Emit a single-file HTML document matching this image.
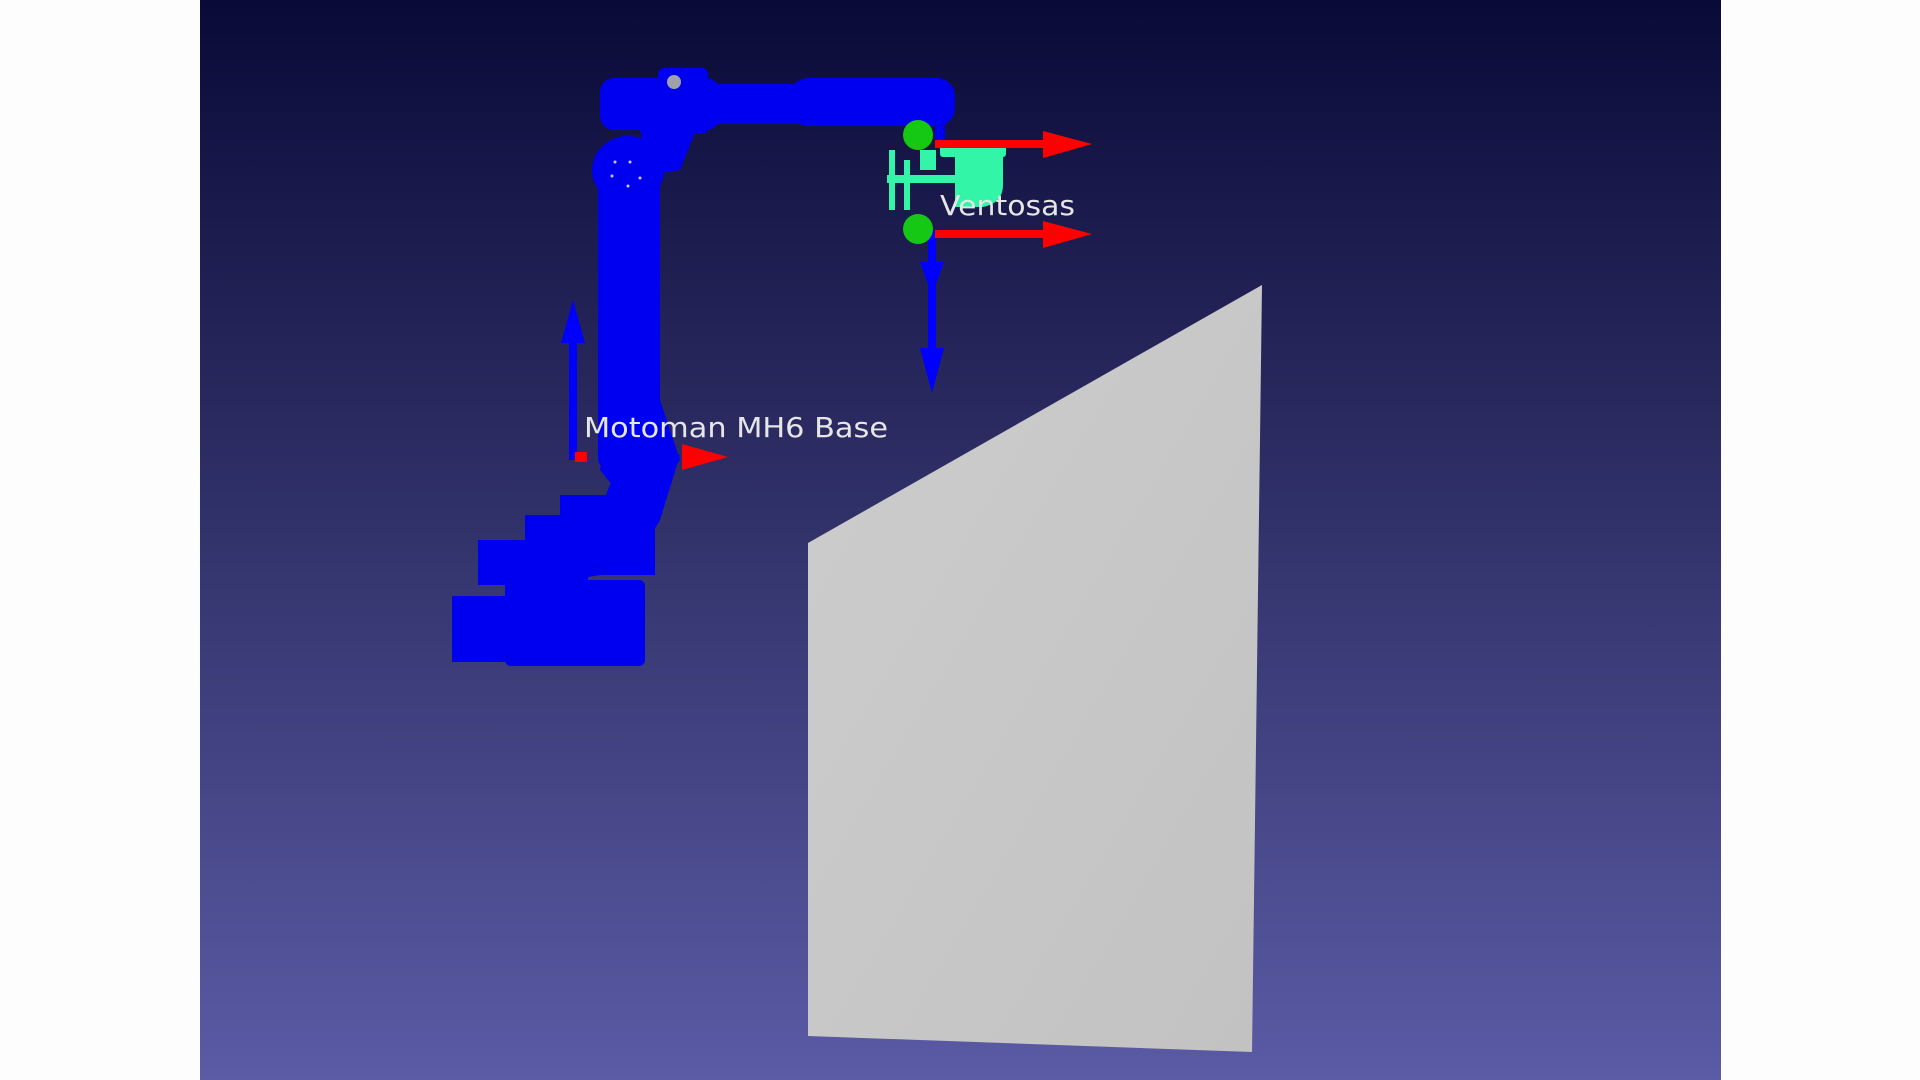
<!DOCTYPE html>
<html><head><meta charset="utf-8"><style>
html,body{margin:0;padding:0;width:1920px;height:1080px;overflow:hidden;background:#fff}
svg{display:block}
</style></head><body>
<svg width="1920" height="1080" viewBox="0 0 1920 1080" xmlns="http://www.w3.org/2000/svg">
<defs>
<linearGradient id="bg" x1="0" y1="0" x2="0" y2="1">
<stop offset="0" stop-color="#0a0a38"/><stop offset="0.5" stop-color="#33336c"/><stop offset="1" stop-color="#5b5ba6"/>
</linearGradient>
<linearGradient id="pn" x1="0" y1="0" x2="1" y2="1">
<stop offset="0" stop-color="#cdcdcd"/><stop offset="1" stop-color="#c2c2c2"/>
</linearGradient>
</defs>
<rect x="0" y="0" width="1920" height="1080" fill="#fdfdfd"/>
<rect x="200" y="0" width="1521" height="1080" fill="url(#bg)"/>
<!-- panel -->
<polygon points="808,543 1262,285 1252,1052 808,1036" fill="url(#pn)"/>
<!-- robot base -->
<g fill="#0000f0">
<rect x="452" y="596" width="80" height="66"/>
<rect x="505" y="580" width="140" height="86" rx="6"/>
<rect x="478" y="540" width="110" height="45"/>
<rect x="525" y="515" width="130" height="60"/>
<rect x="560" y="495" width="95" height="40"/>
<polygon points="570,580 612,480 640,440 680,455 660,520 630,570"/>
<polygon points="600,470 610,400 660,400 680,460 640,520"/>
<!-- vertical arm -->
<rect x="598" y="160" width="62" height="310" rx="12"/>
<ellipse cx="628" cy="170" rx="36" ry="34"/>
<!-- upper arm -->
<rect x="600" y="78" width="120" height="52" rx="14"/>
<rect x="658" y="68" width="50" height="66" rx="6"/>
<rect x="700" y="84" width="110" height="40"/>
<rect x="790" y="78" width="165" height="48" rx="18"/>
<polygon points="640,130 700,120 680,170 650,175"/>
<rect x="935" y="110" width="10" height="30"/>
</g>
<circle cx="674" cy="82" r="7" fill="#a0a0a8"/>
<g fill="#c8c8f0"><circle cx="615" cy="162" r="1.5"/><circle cx="630" cy="162" r="1.5"/><circle cx="612" cy="176" r="1.5"/><circle cx="640" cy="178" r="1.5"/><circle cx="628" cy="186" r="1.5"/></g>
<!-- tool -->
<g fill="#33f5a8">
<rect x="940" y="145" width="66" height="12" rx="3"/>
<path d="M955,155 h48 v30 q0,18 -20,22 h-28 z"/>
<rect x="887" y="175" width="80" height="8"/>
<rect x="889" y="150" width="6" height="60"/>
<rect x="904" y="160" width="6" height="50"/>
<rect x="920" y="150" width="16" height="20"/>
</g>
<!-- blue axes -->
<g fill="#0000ff">
<rect x="928" y="230" width="8" height="125"/>
<polygon points="920,262 944,262 932,295"/>
<polygon points="920,348 944,348 932,393"/>
<rect x="569" y="335" width="8" height="125"/>
<polygon points="561,343 585,343 573,300"/>
</g>
<!-- red axes -->
<g fill="#ff0000">
<rect x="935" y="140" width="110" height="8"/>
<polygon points="1043,131 1092,144 1043,158"/>
<rect x="935" y="230" width="110" height="8"/>
<polygon points="1043,221 1092,234 1043,248"/>
<polygon points="682,444 728,457 682,470"/>
<rect x="575" y="452" width="12" height="10"/>
</g>
<circle cx="918" cy="135" r="15" fill="#14c814"/>
<circle cx="918" cy="229" r="15" fill="#14c814"/>
<g font-family="'DejaVu Sans','Liberation Sans',sans-serif" font-size="28" fill="#e6e6e6">
<text x="584" y="437" textLength="304" lengthAdjust="spacingAndGlyphs">Motoman MH6 Base</text>
<text x="940" y="215" textLength="135" lengthAdjust="spacingAndGlyphs">Ventosas</text>
</g>
</svg>
</body></html>
